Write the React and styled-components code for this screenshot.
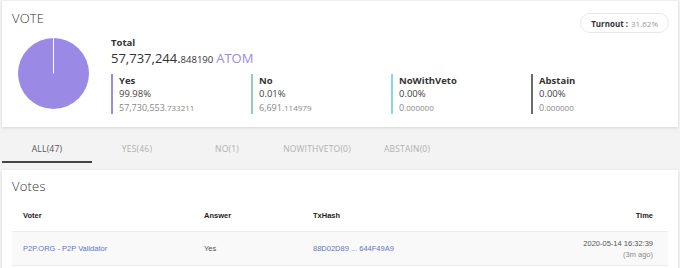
import React from "react"
import styled, { createGlobalStyle } from "styled-components"

const GlobalStyle = createGlobalStyle`
  html, body {
    margin: 0;
    padding: 0;
    background: #f3f3f3;
  }
  body {
    font-family: "Open Sans", "Noto Sans", sans-serif;
    color: #333;
  }
`

const options = [
  { name: "Yes", pct: "99.98%", int: "57,730,553", dec: ".733211", color: "#9a8ae6" },
  { name: "No", pct: "0.01%", int: "6,691", dec: ".114979", color: "#8ed1ae" },
  { name: "NoWithVeto", pct: "0.00%", int: "0", dec: ".000000", color: "#86d7e0" },
  { name: "Abstain", pct: "0.00%", int: "0", dec: ".000000", color: "#6a6a6a" },
]

const tabs = ["ALL(47)", "YES(46)", "NO(1)", "NOWITHVETO(0)", "ABSTAIN(0)"]

const Page = styled.div`
  width: 680px;
  height: 268px;
  overflow: hidden;
  padding: 1px 2px 0;
  box-sizing: border-box;
`

const Card = styled.div`
  background: #fff;
  box-shadow: 0 1px 3px rgba(0, 0, 0, 0.12);
  position: relative;
`

const TopCard = styled(Card)`
  height: 126px;
  padding: 9px 10px 0;
  box-sizing: border-box;
`

const Title = styled.div`
  font-size: 13px;
  font-weight: 300;
  line-height: 16px;
  color: #333;
  letter-spacing: 0.2px;
`

const Turnout = styled.div`
  position: absolute;
  top: 12px;
  right: 9px;
  height: 18px;
  padding: 0 10px;
  border: 1px solid #e8e8e8;
  border-radius: 10px;
  display: flex;
  align-items: center;
  font-size: 8px;
  color: #999;
  b {
    color: #333;
    font-weight: 700;
    margin-right: 3px;
  }
`

const Body = styled.div`
  display: flex;
  align-items: flex-start;
  margin-top: 10px;
`

const PieWrap = styled.div`
  width: 99px;
  padding: 2px 0 0 6px;
  box-sizing: border-box;
  flex-shrink: 0;
`

const Stats = styled.div`
  flex: 1;
`

const Label = styled.div`
  font-size: 9.5px;
  font-weight: 700;
  line-height: 12px;
  margin-top: 1px;
`

const TotalValue = styled.div`
  font-size: 13px;
  line-height: 18px;
  color: #333;
  small {
    font-size: 9.5px;
  }
  span {
    color: #9a8ae6;
    margin-left: 3px;
  }
`

const Options = styled.div`
  display: grid;
  grid-template-columns: repeat(4, 140px);
  margin-top: 5px;
`

const Option = styled.div`
  border-left: 2px solid ${(p) => p.$color};
  padding-left: 6px;
  height: 40px;
  display: flex;
  flex-direction: column;
  justify-content: center;
`

const Pct = styled.div`
  font-size: 9.5px;
  line-height: 14px;
  color: #444;
`

const Amount = styled.div`
  font-size: 9px;
  line-height: 13px;
  color: #888;
  small {
    font-size: 8px;
  }
`

const Tabs = styled.div`
  display: flex;
  height: 36px;
`

const Tab = styled.div`
  width: 90px;
  display: flex;
  align-items: center;
  justify-content: center;
  font-size: 8.5px;
  letter-spacing: 0.2px;
  color: ${(p) => (p.$active ? "#555" : "#b0b0b0")};
  border-bottom: 2px solid ${(p) => (p.$active ? "#444" : "transparent")};
  padding-top: 9px;
  box-sizing: border-box;
`

const VotesCard = styled(Card)`
  margin-top: 7px;
  padding: 8px 10px 0;
  height: 120px;
  box-sizing: border-box;
`

const Table = styled.table`
  width: 100%;
  border-collapse: collapse;
  margin-top: 6px;
  font-family: "Liberation Sans", Arial, sans-serif;
  font-size: 7.5px;
  th {
    font-weight: 700;
    color: #222;
    text-align: left;
    height: 29px;
    vertical-align: middle;
  }
  td {
    height: 31px;
    background: #f9f9f9;
    border-top: 1px solid #ececec;
    border-bottom: 1px solid #ececec;
    color: #555;
    vertical-align: middle;
  }
  th:first-child,
  td:first-child {
    padding-left: 11px;
  }
  th:last-child,
  td:last-child {
    text-align: right;
    padding-right: 15px;
  }
`

const Link = styled.a`
  color: #5a78c8;
  text-decoration: none;
`

const Ago = styled.div`
  color: #888;
  margin-top: 2px;
`

const Pie = () => (
  <svg width="71" height="71" viewBox="0 0 71 71">
    <circle cx="35.5" cy="35.5" r="35.5" fill="#9a8ae6" />
    <line x1="35.5" y1="35.5" x2="35.5" y2="0" stroke="#fff" strokeWidth="1" />
  </svg>
)

const App = () => (
  <Page>
    <GlobalStyle />
    <TopCard>
      <Title>VOTE</Title>
      <Turnout>
        <b>Turnout :</b> 31.62%
      </Turnout>
      <Body>
        <PieWrap>
          <Pie />
        </PieWrap>
        <Stats>
          <Label>Total</Label>
          <TotalValue>
            57,737,244.<small>848190</small>
            <span>ATOM</span>
          </TotalValue>
          <Options>
            {options.map((o) => (
              <Option key={o.name} $color={o.color}>
                <Label>{o.name}</Label>
                <Pct>{o.pct}</Pct>
                <Amount>
                  {o.int}
                  <small>{o.dec}</small>
                </Amount>
              </Option>
            ))}
          </Options>
        </Stats>
      </Body>
    </TopCard>
    <Tabs>
      {tabs.map((t, i) => (
        <Tab key={t} $active={i === 0}>
          {t}
        </Tab>
      ))}
    </Tabs>
    <VotesCard>
      <Title>Votes</Title>
      <Table>
        <thead>
          <tr>
            <th style={{ width: 179 }}>Voter</th>
            <th style={{ width: 107 }}>Answer</th>
            <th>TxHash</th>
            <th>Time</th>
          </tr>
        </thead>
        <tbody>
          <tr>
            <td>
              <Link>P2P.ORG - P2P Validator</Link>
            </td>
            <td>Yes</td>
            <td>
              <Link>88D02D89 ... 644F49A9</Link>
            </td>
            <td>
              2020-05-14 16:32:39
              <Ago>(3m ago)</Ago>
            </td>
          </tr>
        </tbody>
      </Table>
    </VotesCard>
  </Page>
)

export default App
